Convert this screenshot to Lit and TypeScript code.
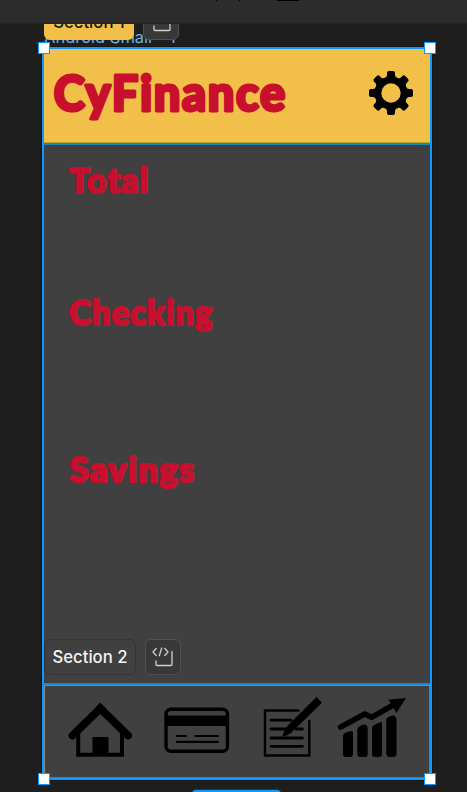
import { LitElement, html, css, svg } from "lit";
import { customElement, property } from "lit/decorators.js";

@customElement("display-title")
class DisplayTitle extends LitElement {
  @property() label = "";
  @property({ type: Number }) size = 36;
  @property({ type: Number }) width = 80;
  static styles = css`
    :host { display: block; }
    svg { display: block; overflow: visible; }
    text {
      font-family: Lato, "Open Sans", sans-serif;
      font-weight: 900;
      letter-spacing: 0.035em;
      fill: #c8102e;
      stroke: #c8102e;
      stroke-linejoin: round;
    }
  `;
  render() {
    const glyph = this.size * 0.94;
    const stroke = this.size * 0.06;
    return html`<svg width=${this.width} height=${this.size}>
      ${svg`<text x=${stroke / 4} y=${this.size * 0.75 - stroke / 2} font-size=${glyph} stroke-width=${stroke}
        textLength=${this.width} lengthAdjust="spacingAndGlyphs">${this.label}</text>`}
    </svg>`;
  }
}

@customElement("app-root")
class AppRoot extends LitElement {
  static styles = css`
    :host {
      display: flex;
      flex-direction: column;
      width: 467px;
      height: 792px;
      overflow: hidden;
      background: #1e1e1e;
      font-family: Inter, "Liberation Sans", sans-serif;
    }
    * { box-sizing: border-box; }
    svg { display: block; }
    .toolbar {
      flex: none;
      height: 24px;
      background: #2c2c2c;
      border-bottom: 1px solid #252525;
    }
    .canvas {
      position: relative;
      flex: 1;
      overflow: hidden;
      padding: 23px 35px 0 42px;
    }
    .frame {
      position: relative;
      display: flex;
      flex-direction: column;
      width: 390px;
      height: 733px;
      border: 2px solid #0d99ff;
      background: #404040;
      box-shadow: 0 0 0 1px #171310;
    }
    .header {
      display: flex;
      justify-content: space-between;
      height: 96px;
      padding: 22px 17px 0 9px;
      background: #f2bf49;
      border-bottom: 2px solid #1686bd;
      box-shadow: inset 0 -1px #c0a520;
    }
    .header display-title { margin-top: 3px; }
    .content {
      flex: 1;
      padding: 22px 0 0 25px;
    }
    .total { height: 132px; }
    .checking { height: 157px; }
    .nav {
      display: flex;
      height: 95px;
      border-top: 2px solid #1688dc;
      box-shadow: inset 1px 1px #8b8780, inset -1px -1px #77736d;
    }
    .nav svg { width: 386px; height: 94px; }
    .handle {
      position: absolute;
      width: 12px;
      height: 12px;
      background: #fff;
      border: 1px solid #0d99ff;
    }
    .tl { left: 38px; top: 18px; }
    .tr { left: 424px; top: 18px; }
    .bl { left: 38px; top: 749px; }
    .br { left: 424px; top: 749px; }
    .frame-name {
      position: absolute;
      left: 44px;
      top: 3px;
      font-size: 16.5px;
      line-height: 20px;
      color: #6fb2e2;
      white-space: pre;
    }
    .pill {
      position: absolute;
      display: flex;
      align-items: center;
      justify-content: center;
      height: 36px;
      border-radius: 6px;
      font-size: 16.7px;
      font-weight: 500;
      white-space: nowrap;
    }
    .one { left: 44px; top: -20px; width: 90px; background: #f2bf49; color: #171717; }
    .two { left: 44px; top: 615px; width: 92px; background: #404040; border: 1px solid #353535; color: #f4f4f4; }
    .dev { width: 36px; background: #383838; border: 1px solid #505050; }
    .dev-one { left: 143px; top: -20px; }
    .dev-two { left: 145px; top: 615px; }
    .size-tag {
      position: absolute;
      left: 191px;
      top: 765px;
      width: 91px;
      height: 20px;
      border-radius: 5px;
      border: 1px solid #12395a;
      background: #0d99ff;
    }
  `;

  devIcon() {
    return html`<svg width="24" height="24" viewBox="0 0 24 24" fill="none" stroke="#d0d0d0" stroke-width="1.3" stroke-linecap="round" stroke-linejoin="round">
      <path d="M5.2 3.5 2 7l3.2 3.5M13.8 3.5 17 7l-3.2 3.5M10.7 3 8.3 10.7"/>
      <path d="M5 16V19.5Q5 20.5 6 20.5H20Q21 20.5 21 19.5V6.5"/>
    </svg>`;
  }

  render() {
    return html`
      <div class="toolbar">
        <svg width="467" height="3"><path d="M216 0h1v1h-1zM239 0h1v1h-1zM277 0h22v1h-22z"/></svg>
      </div>
      <div class="canvas">
        <div class="frame">
          <div class="header">
            <display-title label="CyFinance" .size=${52} .width=${233}></display-title>
            <svg width="44" height="44" viewBox="-22 -22 44 44">
              <path fill-rule="evenodd" d="M0-16.5A16.5 16.5 0 1 0 0 16.5A16.5 16.5 0 1 0 0-16.5ZM0-9.7A9.7 9.7 0 1 1 0 9.7A9.7 9.7 0 1 1 0-9.7Z"/>
              ${[0, 45, 90, 135, 180, 225, 270, 315].map(
                (a) => svg`<path transform="rotate(${a})" d="M-6.5-14.5Q-4-16-4-18V-20Q-4-22-2-22H2Q4-22 4-20V-18Q4-16 6.5-14.5Z"/>`
              )}
            </svg>
          </div>
          <div class="content">
            <div class="total"><display-title label="Total" .size=${36} .width=${80}></display-title></div>
            <div class="checking"><display-title label="Checking" .size=${36} .width=${144}></display-title></div>
            <display-title label="Savings" .size=${36} .width=${126}></display-title>
          </div>
          <div class="nav">
            <svg viewBox="44 685 386 94">
              <g fill="none" stroke="#000">
                <path d="M72.5 735.5 100.3 708.5 128 735.5" stroke-width="8" stroke-linecap="round"/>
                <path d="M78.2 732V754.8H122V732" stroke-width="4"/>
                <rect x="166" y="709.2" width="61.5" height="42" rx="5" stroke-width="3.4"/>
                <path d="M176.8 736H186M195.5 736H218M176.8 741.8H218" stroke-width="2.2" stroke-linecap="round"/>
                <path d="M298.5 710.5H265V755.5H309.3V721" stroke-width="2.4" stroke-linecap="round" stroke-linejoin="miter"/>
                <path d="M271 720.2H291M271 729H286M296 729H302.5M271 738H302.5M271 746.3H302.5" stroke-width="2.8" stroke-linecap="round"/>
              </g>
              <path d="M100.3 702.8 106 708.5 100.3 714 94.6 708.5Z"/>
              <path d="M92.5 737H108.5V755H92.5Z"/>
              <path d="M165 715.5H229V726H165Z"/>
              <path d="M316.5 697 322 702.8 293.5 730.5Q290 735 282.5 736.7Q283.2 731 288 725.2Z"/>
              <path d="M340.5 727.2 364.7 714 371.5 717.3 391.5 706" fill="none" stroke="#000" stroke-width="5.5" stroke-linecap="round" stroke-linejoin="round"/>
              <path d="M388.5 699.8 406 698 396.5 713Z"/>
              <path d="M343 736Q343 732 352 731Q353 731 353 732.5V754Q353 757 350 757H346Q343 757 343 754ZM357.3 729Q359 725 364.5 724.5Q367.7 725 367.7 728V754Q367.7 757 364.7 757H360.3Q357.3 757 357.3 754ZM372 727Q374 724.5 381 722Q382 722 382 724V754Q382 757 379 757H375Q372 757 372 754ZM386.3 719Q388 716 393 715.5Q396.5 716.5 396.5 719V754Q396.5 757 393.5 757H389.3Q386.3 757 386.3 754Z"/>
            </svg>
          </div>
        </div>
        <div class="frame-name">Android Small - 1</div>
        <div class="pill one">Section 1</div>
        <div class="pill dev dev-one">${this.devIcon()}</div>
        <div class="pill two">Section 2</div>
        <div class="pill dev dev-two">${this.devIcon()}</div>
        <div class="handle tl"></div>
        <div class="handle tr"></div>
        <div class="handle bl"></div>
        <div class="handle br"></div>
        <div class="size-tag"></div>
      </div>
    `;
  }
}
